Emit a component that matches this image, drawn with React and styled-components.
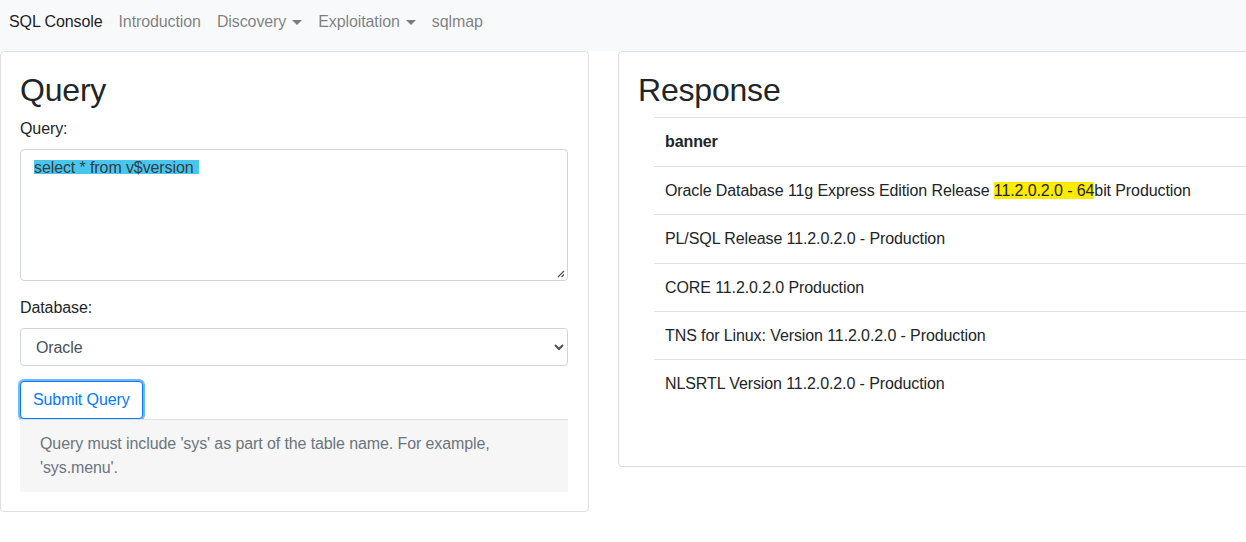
import React from 'react';
import styled, { createGlobalStyle } from 'styled-components';

const GlobalStyle = createGlobalStyle`
  body {
    margin: 0;
    font-family: "Liberation Sans", Arial, sans-serif;
    font-size: 16px;
    line-height: 1.5;
    letter-spacing: -0.1px;
    color: #212529;
    background: #ffffff;
    overflow: hidden;
  }
  * { box-sizing: border-box; }
`;

const Navbar = styled.nav`
  height: 51px;
  padding: 10px 0 0 1px;
  background-color: #f8f9fa;
  display: flex;
  align-items: flex-start;
`;

const NavLink = styled.a`
  display: flex;
  align-items: center;
  padding: 0 8px;
  line-height: 24px;
  color: ${p => (p.$active ? 'rgba(0,0,0,.9)' : 'rgba(0,0,0,.5)')};
  text-decoration: none;
  cursor: pointer;
`;

const Caret = styled.span`
  display: inline-block;
  margin-left: 6px;
  border-top: 5px solid currentColor;
  border-left: 5px solid transparent;
  border-right: 5px solid transparent;
`;

const Main = styled.main`
  display: flex;
  gap: 29px;
  align-items: flex-start;
`;

const Card = styled.section`
  flex: 0 0 ${p => p.$width}px;
  border: 1px solid rgba(0,0,0,.125);
  border-radius: 4px;
  padding: 19px 20px ${p => p.$bottom}px 19px;
`;

const Title = styled.h2`
  margin: 0 0 8px;
  font-size: 32px;
  font-weight: 500;
  line-height: 1.2;
  letter-spacing: -0.2px;
`;

const Label = styled.label`
  display: block;
  margin-bottom: 8px;
`;

const FormGroup = styled.div`
  margin-bottom: ${p => p.$gap || 16}px;
`;

const TextArea = styled.div`
  position: relative;
  height: 132px;
  padding: 6px 12px 6px 13px;
  border: 1px solid #ced4da;
  border-radius: 4px;
  color: #495057;
`;

const Selected = styled.span`
  display: inline-block;
  padding-right: 5px;
  line-height: 24px;
  color: #353c42;
  background: linear-gradient(transparent 4px, #48c7ee 4px, #48c7ee 18px, transparent 18px);
`;

const Grip = styled.svg`
  position: absolute;
  right: 2px;
  bottom: 2px;
`;

const Select = styled.select`
  display: block;
  width: 100%;
  height: 38px;
  padding: 6px 11px;
  font-family: inherit;
  font-size: 16px;
  letter-spacing: -0.1px;
  color: #495057;
  background: #fff;
  border: 1px solid #ced4da;
  border-radius: 4px;
`;

const Button = styled.button`
  display: block;
  padding: 6px 12px;
  font-family: inherit;
  font-size: 16px;
  line-height: 24px;
  letter-spacing: -0.1px;
  color: #007bff;
  background: #fff;
  border: 1px solid #007bff;
  border-radius: 4px;
  box-shadow: 0 0 0 2px rgba(0,123,255,.55);
  cursor: pointer;
`;

const Help = styled.div`
  padding: 12px 20px;
  background: #f6f6f6;
  border-top: 1px solid #dee2e6;
  color: #6c757d;
`;

const TableWrap = styled.div`
  padding-left: 16px;
`;

const Table = styled.table`
  width: 100%;
  border-collapse: collapse;
  margin-bottom: 16px;
`;

const Cell = styled.td`
  padding: 12px 11px 11.4px;
  border-top: 1px solid #dee2e6;
  text-align: left;
  vertical-align: top;
  font-weight: ${p => (p.$head ? 700 : 400)};
`;

const Mark = styled.span`
  background: #ffeb00;
`;

const rows = [
  <>Oracle Database 11g Express Edition Release <Mark>11.2.0.2.0 - 64</Mark>bit Production</>,
  'PL/SQL Release 11.2.0.2.0 - Production',
  'CORE 11.2.0.2.0 Production',
  'TNS for Linux: Version 11.2.0.2.0 - Production',
  'NLSRTL Version 11.2.0.2.0 - Production',
];

export default function App() {
  return (
    <>
      <GlobalStyle />
      <Navbar>
        <NavLink $active>SQL Console</NavLink>
        <NavLink>Introduction</NavLink>
        <NavLink>Discovery<Caret /></NavLink>
        <NavLink>Exploitation<Caret /></NavLink>
        <NavLink>sqlmap</NavLink>
      </Navbar>
      <Main>
        <Card $width={589} $bottom={19}>
          <Title>Query</Title>
          <FormGroup $gap={15}>
            <Label>Query:</Label>
            <TextArea>
              <Selected>select * from v$version</Selected>
              <Grip width="9" height="9" viewBox="0 0 9 9">
                <path d="M8 2 L2 8 M8 5.5 L5.5 8" stroke="#555" strokeWidth="1.3" />
              </Grip>
            </TextArea>
          </FormGroup>
          <FormGroup $gap={15}>
            <Label>Database:</Label>
            <Select defaultValue="oracle">
              <option value="oracle">Oracle</option>
              <option value="mysql">MySQL</option>
              <option value="mssql">MSSQL</option>
            </Select>
          </FormGroup>
          <Button>Submit Query</Button>
          <Help>Query must include 'sys' as part of the table name. For example, 'sys.menu'.</Help>
        </Card>
        <Card $width={660} $bottom={42}>
          <Title>Response</Title>
          <TableWrap>
            <Table>
              <thead>
                <tr><Cell as="th" $head>banner</Cell></tr>
              </thead>
              <tbody>
                {rows.map((r, i) => (
                  <tr key={i}><Cell>{r}</Cell></tr>
                ))}
              </tbody>
            </Table>
          </TableWrap>
        </Card>
      </Main>
    </>
  );
}
